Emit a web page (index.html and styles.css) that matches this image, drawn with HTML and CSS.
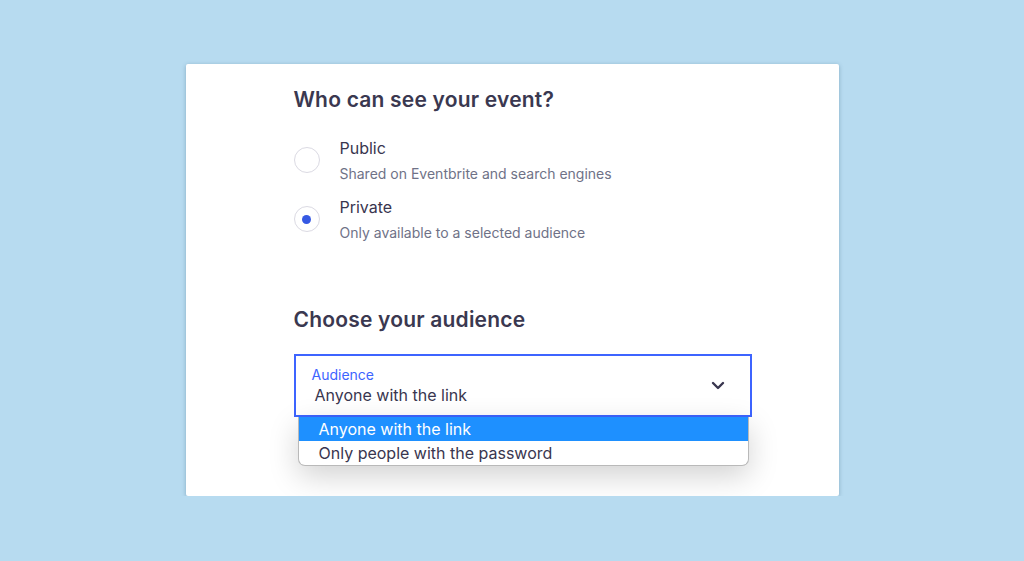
FILE: index.html
```html
<!DOCTYPE html>
<html>
	<head>
		<meta charset="utf-8" />
		<title>Who can see your event?</title>
		<link rel="stylesheet" href="styles.css">
	</head>
	<body>
		<div class="card">
			<div class="content">
				<h2 class="title">Who can see your event?</h2>
				<div class="options">
					<label class="option">
						<span class="radio"></span>
						<span class="optionText">
							<span class="optionName">Public</span>
							<span class="optionDesc">Shared on Eventbrite and search engines</span>
						</span>
					</label>
					<label class="option">
						<span class="radio checked"></span>
						<span class="optionText">
							<span class="optionName">Private</span>
							<span class="optionDesc">Only available to a selected audience</span>
						</span>
					</label>
				</div>

				<h2 class="title audienceTitle">Choose your audience</h2>
				<div class="selectWrap">
					<div class="select">
						<div class="selectText">
							<span class="selectLabel">Audience</span>
							<span class="selectValue">Anyone with the link</span>
						</div>
						<svg class="chevron" width="14" height="9" viewBox="0 0 14 9">
							<path d="M2 2l5 5 5-5" fill="none" stroke="#39364f" stroke-width="2.4" stroke-linecap="round" stroke-linejoin="round"/>
						</svg>
					</div>
					<ul class="dropdown">
						<li class="active">Anyone with the link</li>
						<li>Only people with the password</li>
					</ul>
				</div>
			</div>
		</div>
	</body>
</html>
```

FILE: styles.css
```css
*,
*::before,
*::after{
	box-sizing: border-box;
}
body{
	margin: 0;
	background: #b7dbf0;
	font-family: Inter, "Noto Sans", sans-serif;
	color: #39364f;
}
.card{
	width: 653px;
	height: 432px;
	margin: 64px auto 0;
	background: #fff;
	border-radius: 2px;
	box-shadow: 0 1px 4px rgba(40, 80, 110, .35);
}
.content{
	width: 458px;
	margin-left: 108px;
	padding-top: 22px;
}
.title{
	margin: 0;
	font-size: 21px;
	line-height: 28px;
	font-weight: 600;
	letter-spacing: .2px;
	color: #3a3850;
}
.options{
	margin-top: 24px;
	display: flex;
	flex-direction: column;
	gap: 14px;
}
.option{
	display: flex;
	align-items: flex-start;
	gap: 20px;
}
.radio{
	width: 26px;
	height: 26px;
	margin-top: 9px;
	border-radius: 50%;
	border: 1px solid #dbdae3;
	display: flex;
	align-items: center;
	justify-content: center;
	flex: none;
}
.radio.checked::after{
	content: "";
	width: 9px;
	height: 9px;
	border-radius: 50%;
	background: #3659e3;
}
.optionText{
	display: flex;
	flex-direction: column;
	gap: 5px;
}
.optionName{
	font-size: 16px;
	line-height: 21px;
}
.optionDesc{
	font-size: 14px;
	line-height: 19px;
	color: #6f7287;
}
.audienceTitle{
	margin-top: 64px;
}
.selectWrap{
	position: relative;
	margin-top: 20px;
}
.select{
	height: 63px;
	border: 2px solid #3d64ff;
	display: flex;
	align-items: center;
	justify-content: space-between;
	padding: 0 25px 0 16px;
}
.selectText{
	display: flex;
	flex-direction: column;
}
.selectLabel{
	font-size: 14px;
	line-height: 18px;
	color: #3d64ff;
}
.selectValue{
	font-size: 16px;
	line-height: 22px;
	padding-left: 3px;
}
.dropdown{
	position: absolute;
	top: 63px;
	left: 4px;
	right: 3px;
	margin: 0;
	padding: 0;
	list-style: none;
	background: #fff;
	border: 1px solid #b9b9b9;
	border-top: none;
	border-radius: 0 0 7px 7px;
	overflow: hidden;
	box-shadow: 0 10px 30px rgba(0, 0, 0, .18);
}
.dropdown li{
	height: 24px;
	line-height: 24px;
	font-size: 16px;
	padding-left: 20px;
}
.dropdown li.active{
	background: #1e90ff;
	color: #fff;
}
```
